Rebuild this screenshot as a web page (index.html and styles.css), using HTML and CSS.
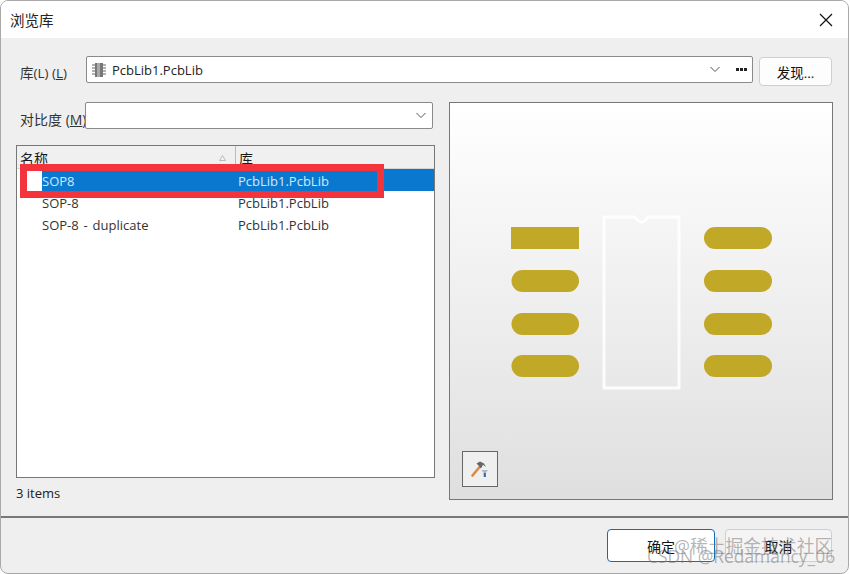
FILE: index.html
```html
<!DOCTYPE html>
<html lang="zh">
<head>
<meta charset="utf-8">
<title>浏览库</title>
<link rel="stylesheet" href="styles.css">
</head>
<body>
<div class="dialog">
  <header class="titlebar">
    <span class="title">浏览库</span>
    <svg class="close" width="14" height="14" viewBox="0 0 14 14"><path d="M1 1L13 13M13 1L1 13" stroke="#111" stroke-width="1.2" fill="none"/></svg>
  </header>
  <main class="content">
    <div class="lib-row">
      <span class="lib-label">库(L) (<u>L</u>)</span>
      <div class="combo lib-combo">
        <svg class="chip" width="16" height="16" viewBox="0 0 16 16">
          <rect x="4" y="1" width="8" height="14" fill="#777"/>
          <rect x="6" y="1" width="3" height="14" fill="#aaa"/>
          <path d="M1 3H4M1 6H4M1 9H4M1 12H4M12 3H15M12 6H15M12 9H15M12 12H15" stroke="#666" stroke-width="1.2"/>
        </svg>
        <span class="combo-text">PcbLib1.PcbLib</span>
        <svg class="chev" width="12" height="7" viewBox="0 0 12 7"><path d="M1.5 1L6 5.5L10.5 1" stroke="#555" fill="none"/></svg>
        <span class="dots"><i></i><i></i><i></i></span>
      </div>
      <button class="btn find">发现...</button>
    </div>
    <div class="columns">
      <div class="left">
        <div class="contrast-row">
          <span class="contrast-label">对比度 (<u>M</u>)</span>
          <div class="combo contrast-combo">
            <svg class="chev" width="12" height="7" viewBox="0 0 12 7"><path d="M1.5 1L6 5.5L10.5 1" stroke="#555" fill="none"/></svg>
          </div>
        </div>
        <div class="list">
          <div class="list-head">
            <span class="col-name">名称<svg class="sort" width="7" height="6" viewBox="0 0 7 6"><path d="M3.5 .5L6.5 5.5H.5Z" fill="none" stroke="#bbb"/></svg></span>
            <span class="col-lib">库</span>
          </div>
          <div class="row selected"><span class="icon-cell"></span><span class="name">SOP8</span><span class="lib">PcbLib1.PcbLib</span></div>
          <div class="row"><span class="icon-cell"></span><span class="name">SOP-8</span><span class="lib">PcbLib1.PcbLib</span></div>
          <div class="row"><span class="icon-cell"></span><span class="name">SOP-8 - duplicate</span><span class="lib">PcbLib1.PcbLib</span></div>
        </div>
        <div class="count">3 items</div>
      </div>
      <div class="preview">
        <svg class="board" width="382" height="396" viewBox="450 103 382 396">
          <g fill="#c2a827">
            <rect x="511" y="227" width="68" height="22"/>
            <rect x="511.500" y="270" width="67.500" height="22" rx="11"/>
            <rect x="511.500" y="313" width="67.500" height="22" rx="11"/>
            <rect x="511.500" y="355" width="67.500" height="22" rx="11"/>
            <rect x="704" y="227" width="68" height="22" rx="11"/>
            <rect x="704" y="270" width="68" height="22" rx="11"/>
            <rect x="704" y="313" width="68" height="22" rx="11"/>
            <rect x="704" y="355" width="68" height="22" rx="11"/>
          </g>
          <path d="M604 217H635Q641.500 227 648 217H679V388H604Z" fill="none" stroke="#fff" stroke-opacity=".85" stroke-width="3"/>
        </svg>
        <button class="tool" aria-label="tool">
          <svg width="20" height="20" viewBox="0 0 20 20">
            <path d="M2.500 16.500L10 7.500" stroke="#d98b45" stroke-width="2.600" stroke-linecap="round"/>
            <path d="M6.500 4.500L10 2.500L14 4.500L16 8L13 5.800L11 9.500L8.500 6.500Z" fill="#666"/>
            <path d="M11.500 11H18L15.800 14H13.700Z" fill="#aeb9c6"/>
            <rect x="13.700" y="14" width="2.200" height="4" fill="#2f6db5"/>
          </svg>
        </button>
      </div>
    </div>
  </main>
  <footer class="footer">
    <button class="btn ok">确定</button>
    <button class="btn cancel">取消</button>
  </footer>
  <div class="highlight"></div>
  <div class="mark-juejin">@稀土掘金技术社区</div>
  <div class="mark-csdn">CSDN @Redamancy_06</div>
</div>
</body>
</html>
```
FILE: styles.css
```css
* { box-sizing: border-box; }
html, body { margin: 0; height: 100%; background: #fff; }
body { font-family: "Open Sans", "Noto Sans CJK SC", sans-serif; font-size: 13px; color: #1a1a1a; overflow: hidden; }
.dialog {
  position: relative; width: 849px; height: 574px; display: flex; flex-direction: column;
  background: #efefef; border: 1px solid #a9a9a9; border-radius: 8px; overflow: hidden;
}
.titlebar { height: 37px; flex: none; background: #fff; display: flex; align-items: center; justify-content: space-between; padding: 0 15px 0 9px; }
.title { font-size: 14.500px; color: #222; }
.close { display: block; }
.content { flex: none; height: 480px; border-bottom: 2px solid #777; padding: 18px 16px 0 15px; display: flex; flex-direction: column; }
.lib-row { display: flex; align-items: flex-start; height: 46px; flex: none; }
.lib-label { width: 70px; padding: 6px 0 0 4px; flex: none; color: #333; font-size: 13.500px; }
.combo { background: #fff; border: 1px solid #8a8a8a; border-radius: 2px; display: flex; align-items: center; }
.lib-combo { width: 667px; height: 27px; padding: 0 5px 0 4px; }
.chip { flex: none; margin-right: 5px; }
.combo-text { flex: 1; color: #222; }
.chev { flex: none; }
.lib-combo .chev { margin-right: 15px; }
.dots { display: flex; gap: 1px; }
.dots i { width: 3px; height: 3px; background: #222; display: block; }
.btn { font: inherit; background: #fdfdfd; border: 1px solid #cfcfcf; border-radius: 4px; color: #111; padding: 0; }
.find { width: 73px; height: 29px; margin: 1px 0 0 6px; padding-top: 1px; font-size: 13.500px; }
.columns { display: flex; gap: 14px; flex: 1; }
.left { width: 419px; flex: none; display: flex; flex-direction: column; }
.contrast-row { display: flex; height: 43px; flex: none; }
.contrast-label { width: 69px; padding: 7px 0 0 4px; flex: none; white-space: nowrap; color: #333; font-size: 14px; }
.contrast-combo { width: 348px; height: 27px; justify-content: flex-end; padding-right: 5px; position: relative; }
.list { height: 333px; flex: none; background: #fff; border: 1px solid #777; }
.list-head { display: flex; height: 23px; background: #f0f0f0; border-bottom: 1px solid #d5d5d5; }
.col-name { width: 219px; padding: 2px 0 0 3px; border-right: 1px solid #bbb; position: relative; font-size: 14px; }
.sort { position: absolute; right: 9px; top: 9px; }
.col-lib { padding: 2px 0 0 3px; font-size: 14px; }
.row { display: grid; grid-template-columns: 25px 196px 1fr; height: 22px; align-items: center; color: #333; padding-top: 2px; }
.row .name { word-spacing: 1.500px; }
.row.selected { background: #0b78cf; color: #cfe8fb; }
.row.selected .icon-cell { background: #fff; margin-top: -2px; height: 22px; }
.count { margin: 6px 0 0 0; color: #222; }
.preview { width: 384px; height: 398px; position: relative; background: linear-gradient(#fff, #fafafa 15%, #dfdfdf); border: 1px solid #777; }
.board { display: block; }
.tool { position: absolute; left: 12px; bottom: 12px; width: 36px; height: 36px; padding: 0; background: #efefef; border: 1px solid #666; display: flex; align-items: center; justify-content: center; }
.footer { flex: 1; display: flex; justify-content: flex-end; gap: 10px; padding: 11px 16px 0 0; align-items: flex-start; }
.ok { width: 108px; height: 33px; border: 1px solid #0f6cbd; background: #fff; font-size: 14px; }
.cancel { width: 107px; height: 33px; background: #f4f4f4; font-size: 14px; }
.highlight { position: absolute; left: 19px; top: 163px; width: 364px; height: 34px; border: 7px solid #f4343c; }
.mark-juejin, .mark-csdn { position: absolute; white-space: nowrap; color: rgba(120,120,120,.55); }
.mark-juejin { left: 673px; top: 531px; font-size: 17.800px; }
.mark-csdn { left: 646px; top: 543px; font-size: 17.400px; }
```
